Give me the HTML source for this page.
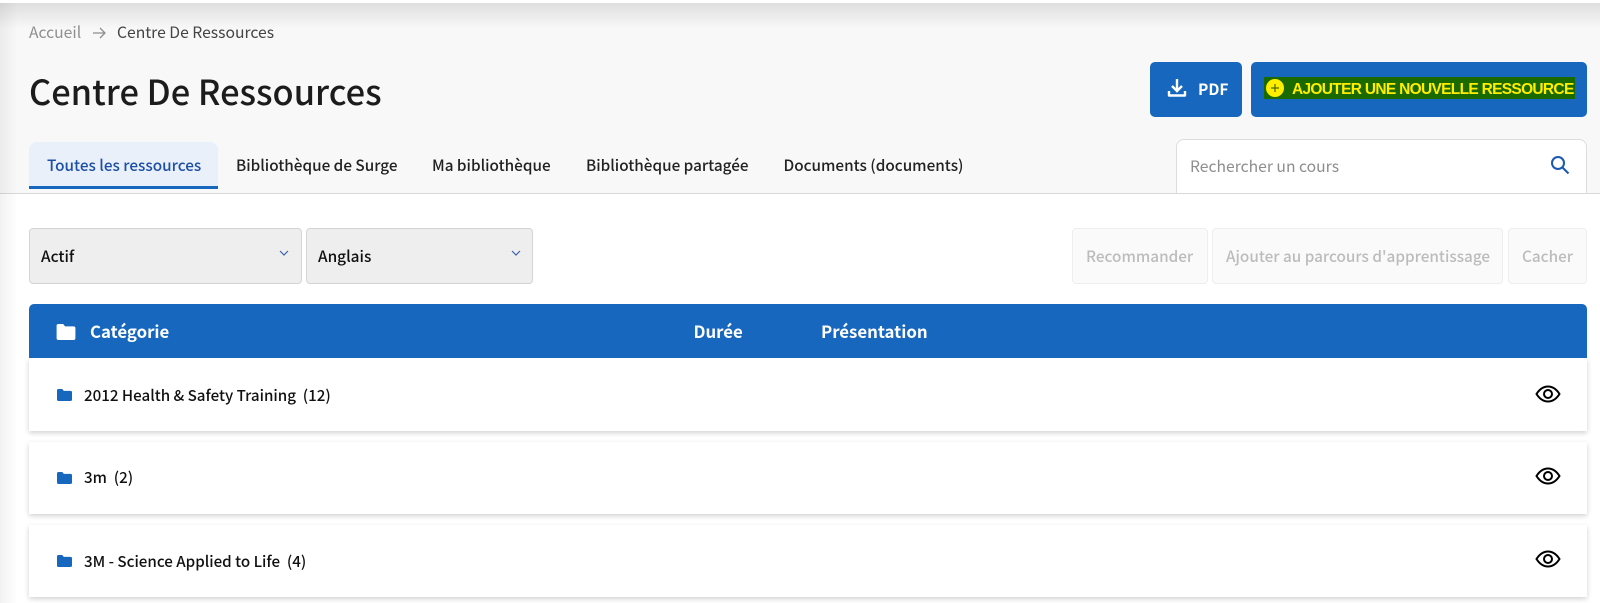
<!DOCTYPE html>
<html lang="fr">
<head>
<meta charset="utf-8">
<title>Centre De Ressources</title>
<style>
html,body{margin:0;padding:0;background:#fff}
body{width:1600px;height:603px;position:relative;overflow:hidden;font-family:"Noto Sans CJK JP","Liberation Sans",sans-serif;color:#111}
div,span,svg{position:absolute;box-sizing:border-box}
.t{white-space:nowrap;line-height:24px;height:24px}
.tab{font-size:15.3px;font-weight:500;color:#222}
.sel{background:#eee;border:1px solid #d4d4d4;border-radius:4px;top:228px;height:56px}
.dis{background:#fafafa;border:1px solid #eee;border-radius:4px;top:228px;height:56px}
.dt{font-size:15.3px;color:#bcbcbc;font-weight:500;top:244px}
.row{left:29px;width:1558px;height:72px;background:#fff;box-shadow:0 2px 5px rgba(0,0,0,.18)}
.rt{font-size:15.15px;color:#111;font-weight:500}
.th{font-size:16.8px;font-weight:700;color:#fff;top:319px}
</style>
</head>
<body>
<div style="left:0;top:0;width:1600px;height:194px;background:#f8f8f8;border-bottom:1px solid #d8d8d8"></div>
<div style="left:0;top:3px;width:1600px;height:26px;background:linear-gradient(#dedede,#f8f8f8)"></div>
<div style="left:0;top:0;width:1600px;height:3px;background:#fff"></div>
<div style="left:0;top:3px;width:18px;height:600px;background:linear-gradient(90deg,rgba(0,0,0,.05),rgba(0,0,0,0))"></div>

<div class="t" style="left:29px;top:20px;font-size:15.7px;color:#8f8f8f">Accueil</div>
<svg style="left:92px;top:26px" width="14" height="14" viewBox="0 0 14 14" fill="none" stroke="#8f8f8f" stroke-width="1.3"><path d="M1 7h12M8 2l5 5-5 5"/></svg>
<div class="t" style="left:117px;top:20px;font-size:15.7px;color:#444">Centre De Ressources</div>
<div class="t" style="left:29px;top:66px;font-size:34.4px;line-height:48px;height:48px;font-weight:500;color:#1c1c1c">Centre De Ressources</div>

<div style="left:1150px;top:62px;width:92px;height:55px;background:#1667bd;border-radius:5px"></div>
<svg style="left:1167px;top:78px" width="20" height="20" viewBox="0 0 20 20" fill="none" stroke="#fff" stroke-width="2.4"><path d="M10 1v11M5 8l5 5 5-5" /><path d="M2 13v4.500h16V13" stroke-linejoin="round"/></svg>
<div class="t" style="left:1198px;top:77px;font-size:15.500px;font-weight:700;color:#fff">PDF</div>

<div style="left:1251px;top:62px;width:336px;height:55px;background:#1667bd;border-radius:5px"></div>
<div style="left:1264px;top:77px;width:311px;height:22px;background:#1a6a00"></div>
<div style="left:1266px;top:79px;width:18px;height:18px;border-radius:50%;background:#ffee00"></div>
<svg style="left:1270px;top:83px" width="10" height="10" viewBox="0 0 10 10" stroke="#4c6a00" stroke-width="1.2"><path d="M5 1v8M1 5h8"/></svg>
<div class="t" style="left:1292px;top:78px;font-family:'Liberation Sans',sans-serif;font-size:15.500px;font-weight:700;color:#ffee00;letter-spacing:-.69px">AJOUTER UNE NOUVELLE RESSOURCE</div>

<div style="left:29px;top:142px;width:189px;height:47px;background:#e9f0fa;border-radius:8px 8px 0 0;border-bottom:3px solid #1667bd"></div>
<div class="t tab" style="left:47px;top:153px;color:#1c4fa5">Toutes les ressources</div>
<div class="t tab" style="left:236px;top:153px">Bibliothèque de Surge</div>
<div class="t tab" style="left:432px;top:153px">Ma bibliothèque</div>
<div class="t tab" style="left:586px;top:153px">Bibliothèque partagée</div>
<div class="t tab" style="left:783.500px;top:153px">Documents (documents)</div>

<div style="left:1176px;top:139px;width:411px;height:54px;background:#fff;border:1px solid #ddd;border-bottom:0;border-radius:8px 8px 0 0"></div>
<div class="t" style="left:1190px;top:154px;font-size:15.700px;color:#8e8e8e">Rechercher un cours</div>
<svg style="left:1550px;top:155px" width="20" height="20" viewBox="0 0 20 20" fill="none" stroke="#1a58b4" stroke-width="2"><circle cx="8" cy="8" r="6"/><path d="M12.500 12.500l6 6"/></svg>

<div class="sel" style="left:29px;width:273px"></div>
<div class="t" style="left:41px;top:244px;font-size:15.400px;font-weight:500">Actif</div>
<svg style="left:279px;top:250px" width="10" height="7" viewBox="0 0 10 7" fill="none" stroke="#3a63b0" stroke-width="1.2"><path d="M1 1l4 4 4-4"/></svg>
<div class="sel" style="left:306px;width:227px"></div>
<div class="t" style="left:318px;top:244px;font-size:15.400px;font-weight:500">Anglais</div>
<svg style="left:511px;top:250px" width="10" height="7" viewBox="0 0 10 7" fill="none" stroke="#3a63b0" stroke-width="1.2"><path d="M1 1l4 4 4-4"/></svg>

<div class="dis" style="left:1072px;width:136px"></div>
<div class="t dt" style="left:1086px">Recommander</div>
<div class="dis" style="left:1212px;width:291px"></div>
<div class="t dt" style="left:1226px">Ajouter au parcours d'apprentissage</div>
<div class="dis" style="left:1508px;width:79px"></div>
<div class="t dt" style="left:1522px">Cacher</div>

<div class="row" style="top:358px;height:73px"></div>
<div class="row" style="top:442px"></div>
<div class="row" style="top:525px"></div>
<div style="left:29px;top:304px;width:1558px;height:54px;background:#1667bd;border-radius:5px 5px 0 0"></div>

<svg style="left:56px;top:324px" width="20" height="16" viewBox="0 0 20 17" fill="#fff"><path d="M0 2a2 2 0 0 1 2-2h5l2 2.500h9a2 2 0 0 1 2 2V15a2 2 0 0 1-2 2H2a2 2 0 0 1-2-2z"/></svg>
<div class="t th" style="left:90px">Catégorie</div>
<div class="t th" style="left:693.500px">Durée</div>
<div class="t th" style="left:821px">Présentation</div>

<svg style="left:57px;top:389px" width="15" height="12" viewBox="0 0 20 16" fill="#1667bd"><path d="M0 2a2 2 0 0 1 2-2h5l2 2.500h9a2 2 0 0 1 2 2V14a2 2 0 0 1-2 2H2a2 2 0 0 1-2-2z"/></svg>
<div class="t rt" style="left:84px;top:383px">2012 Health &amp; Safety Training&nbsp; (12)</div>
<svg style="left:57px;top:472px" width="15" height="12" viewBox="0 0 20 16" fill="#1667bd"><path d="M0 2a2 2 0 0 1 2-2h5l2 2.500h9a2 2 0 0 1 2 2V14a2 2 0 0 1-2 2H2a2 2 0 0 1-2-2z"/></svg>
<div class="t rt" style="left:84px;top:465px">3m&nbsp; (2)</div>
<svg style="left:57px;top:555px" width="15" height="12" viewBox="0 0 20 16" fill="#1667bd"><path d="M0 2a2 2 0 0 1 2-2h5l2 2.500h9a2 2 0 0 1 2 2V14a2 2 0 0 1-2 2H2a2 2 0 0 1-2-2z"/></svg>
<div class="t rt" style="left:84px;top:549px">3M - Science Applied to Life&nbsp; (4)</div>

<svg style="left:1535px;top:385px" width="26" height="18" viewBox="0 0 26 18" fill="none" stroke="#000" stroke-width="2"><path d="M1.500 9C5 3.500 9 1.500 13 1.500S21 3.500 24.500 9C21 14.500 17 16.500 13 16.500S5 14.500 1.500 9z"/><circle cx="13" cy="9" r="4"/></svg>
<svg style="left:1535px;top:467px" width="26" height="18" viewBox="0 0 26 18" fill="none" stroke="#000" stroke-width="2"><path d="M1.500 9C5 3.500 9 1.500 13 1.500S21 3.500 24.500 9C21 14.500 17 16.500 13 16.500S5 14.500 1.500 9z"/><circle cx="13" cy="9" r="4"/></svg>
<svg style="left:1535px;top:550px" width="26" height="18" viewBox="0 0 26 18" fill="none" stroke="#000" stroke-width="2"><path d="M1.500 9C5 3.500 9 1.500 13 1.500S21 3.500 24.500 9C21 14.500 17 16.500 13 16.500S5 14.500 1.500 9z"/><circle cx="13" cy="9" r="4"/></svg>
</body>
</html>
